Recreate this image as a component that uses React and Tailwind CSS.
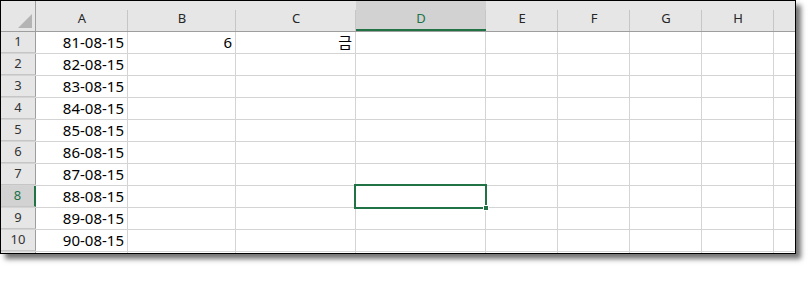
import React from 'react'

const cols = [
  { key: 'A', w: 'w-[92px]' },
  { key: 'B', w: 'w-[108px]' },
  { key: 'C', w: 'w-[120px]' },
  { key: 'D', w: 'w-[130px]' },
  { key: 'E', w: 'w-[72px]' },
  { key: 'F', w: 'w-[72px]' },
  { key: 'G', w: 'w-[72px]' },
  { key: 'H', w: 'w-[72px]' },
]

const rows = [
  { n: 1, A: '81-08-15', B: '6', C: '금' },
  { n: 2, A: '82-08-15' },
  { n: 3, A: '83-08-15' },
  { n: 4, A: '84-08-15' },
  { n: 5, A: '85-08-15' },
  { n: 6, A: '86-08-15' },
  { n: 7, A: '87-08-15' },
  { n: 8, A: '88-08-15' },
  { n: 9, A: '89-08-15' },
  { n: 10, A: '90-08-15' },
  { n: 11, hidden: true },
]

const SEL_ROW = 8
const SEL_COL = 'D'

const App = () => {
  return (
    <div className="w-[808px] h-[282px] bg-white">
      <div className="w-[796px] h-[254px] border border-black bg-white shadow-[5px_5px_5px_rgba(0,0,0,0.55)] overflow-hidden relative font-['Noto_Sans','Noto_Sans_CJK_KR',sans-serif]">
        {/* Column headers */}
        <div className="flex h-[31px] bg-[#e6e6e6] border-b border-[#9e9e9e]">
          <div className="w-[35px] shrink-0 h-full border-r border-[#9e9e9e] relative">
            <div className="absolute right-[3px] bottom-[3px] w-0 h-0 border-l-[14px] border-l-transparent border-b-[14px] border-b-[#b4b4b4]" />
          </div>
          {cols.map((c) => (
            <div
              key={c.key}
              className={`${c.w} shrink-0 h-full relative flex justify-center pt-[9px] text-[13px] leading-[16px] after:absolute after:right-0 after:top-[9px] after:bottom-0 after:w-px after:bg-[#c6c6c6] ${
                c.key === SEL_COL ? 'bg-[#d2d2d2] text-[#217346] border-b-2 border-[#217346]' : 'text-[#262626]'
              }`}
            >
              {c.key}
            </div>
          ))}
          <div className="flex-1" />
        </div>

        {/* Rows */}
        {rows.map((r) => (
          <div key={r.n} className="flex h-[22px] border-b border-[#d4d4d4]">
            <div
              className={`w-[35px] shrink-0 h-full -mb-px border-b flex items-center justify-center text-[13px] ${
                r.n === SEL_ROW
                  ? 'bg-[#d2d2d2] text-[#217346] border-r-2 border-r-[#217346] border-b-[#c6c6c6]'
                  : 'bg-[#e6e6e6] text-[#333] border-r border-r-[#9e9e9e] border-b-[#c6c6c6]'
              }`}
            >
              {r.hidden ? '' : r.n}
            </div>
            {cols.map((c) => (
              <div
                key={c.key}
                className={`${c.w} shrink-0 h-full border-r border-[#d4d4d4] flex items-center justify-end pr-[3px] text-[15px] text-black`}
              >
                {r[c.key] || ''}
              </div>
            ))}
            <div className="flex-1" />
          </div>
        ))}

        {/* Active cell D8 */}
        <div className="absolute left-[353px] top-[183px] w-[133px] h-[25px] border-2 border-[#217346]">
          <div className="absolute -right-[4px] -bottom-[4px] w-[6px] h-[6px] bg-[#217346] border border-white" />
        </div>
      </div>
    </div>
  )
}

export default App
